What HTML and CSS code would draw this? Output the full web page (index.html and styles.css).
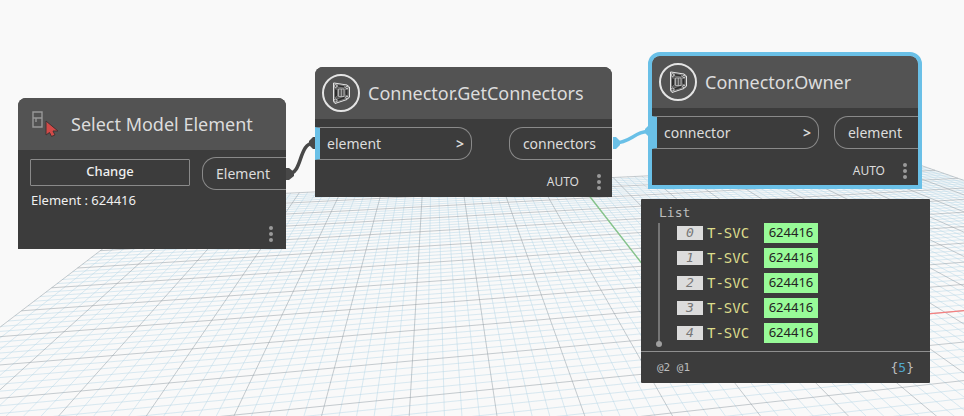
FILE: index.html
```html
<!DOCTYPE html>
<html lang="en">
<head>
<meta charset="utf-8">
<meta name="viewport" content="width=device-width, initial-scale=1">
<title>Graph workspace</title>
<link rel="stylesheet" href="styles.css">
</head>
<body>
<main class="workspace">
  <svg class="backdrop" aria-hidden="true">
    <path id="grid-minor" class="grid-minor"/>
    <path id="grid-major" class="grid-major"/>
    <path id="axis-x" class="axis-x"/>
    <path id="axis-y" class="axis-y"/>
  </svg>

  <svg class="wires" aria-hidden="true">
    <path class="wire" d="M288 174C303 174 298 143 314 143"/>
    <path class="plug" d="M286 168h3l5 4v4l-5 4h-3z"/>
    <path class="plug" d="M315 137h-2l-4 4v4l4 4h2z"/>
    <path class="wire wire-active" d="M615 143C631 143 634 131 652 131"/>
    <path class="plug plug-active" d="M613 137h3l4 4v4l-4 4h-3z"/>
    <path class="plug plug-active" d="M650 125h-1l-4 4v4l4 4h1z"/>
  </svg>

  <section class="node node-select">
    <header class="node-head">
      <svg class="pick-icon" viewBox="0 0 28 28" aria-hidden="true">
        <path class="pick-box" d="M2 2h9v15H2zM2 8h9M5 8v4"/>
        <path class="pick-arrow" d="M15 11v14l3.500-2.500 2 4 3.500-1.500-2-4h5z"/>
      </svg>
      <h2>Select Model Element</h2>
    </header>
    <div class="select-body">
      <div class="select-main">
        <button class="change" type="button">Change</button>
        <p>Element : 624416</p>
      </div>
      <div class="port port-out">Element</div>
    </div>
    <footer class="node-foot">
      <button class="more" type="button" aria-label="Node options"><i></i><i></i><i></i></button>
    </footer>
  </section>

  <section class="node node-get">
    <header class="node-head">
      <svg class="node-icon" viewBox="0 0 40 40" aria-hidden="true">
        <circle cx="20" cy="20" r="18"/>
        <path d="M13 10l13 2 2.500 2v10l-2.500 2.500-12 4-1.500-2V10z"/>
        <path class="dark" d="M13.500 15.500l3 1v6.500l-3 2zM24 16.500l3-.5v7l-3-1zM16.500 11.500l7 1.200v2.300l-7-1zM16 26l8-3v3l-8 2.500z"/>
        <path class="thin" d="M17.500 16h5.500v7.500h-5.500zM20.300 16v7.500"/>
        <circle class="dot" cx="14.500" cy="13" r="1.500"/><circle class="dot" cx="14.500" cy="27.500" r="1.500"/>
        <circle class="dot" cx="26" cy="14.500" r="1.300"/><circle class="dot" cx="26" cy="24.500" r="1.300"/>
      </svg>
      <h2>Connector.GetConnectors</h2>
    </header>
    <div class="ports">
      <div class="port port-in"><span>element</span><b>&gt;</b></div>
      <div class="port port-out">connectors</div>
    </div>
    <footer class="node-foot">
      <span class="lacing">AUTO</span>
      <button class="more" type="button" aria-label="Node options"><i></i><i></i><i></i></button>
    </footer>
  </section>

  <section class="node node-owner">
    <header class="node-head">
      <svg class="node-icon" viewBox="0 0 40 40" aria-hidden="true">
        <circle cx="20" cy="20" r="18"/>
        <path d="M13 10l13 2 2.500 2v10l-2.500 2.500-12 4-1.500-2V10z"/>
        <path class="dark" d="M13.500 15.500l3 1v6.500l-3 2zM24 16.500l3-.5v7l-3-1zM16.500 11.500l7 1.200v2.300l-7-1zM16 26l8-3v3l-8 2.500z"/>
        <path class="thin" d="M17.500 16h5.500v7.500h-5.500zM20.300 16v7.500"/>
        <circle class="dot" cx="14.500" cy="13" r="1.500"/><circle class="dot" cx="14.500" cy="27.500" r="1.500"/>
        <circle class="dot" cx="26" cy="14.500" r="1.300"/><circle class="dot" cx="26" cy="24.500" r="1.300"/>
      </svg>
      <h2>Connector.Owner</h2>
    </header>
    <div class="ports">
      <div class="port port-in"><span>connector</span><b>&gt;</b></div>
      <div class="port port-out">element</div>
    </div>
    <footer class="node-foot">
      <span class="lacing">AUTO</span>
      <button class="more" type="button" aria-label="Node options"><i></i><i></i><i></i></button>
    </footer>
  </section>

  <section class="preview">
    <div class="preview-body">
      <p class="preview-title">List</p>
      <ul class="items">
        <li><em>0</em><span>T-SVC</span><a href="#624416">624416</a></li>
        <li><em>1</em><span>T-SVC</span><a href="#624416">624416</a></li>
        <li><em>2</em><span>T-SVC</span><a href="#624416">624416</a></li>
        <li><em>3</em><span>T-SVC</span><a href="#624416">624416</a></li>
        <li><em>4</em><span>T-SVC</span><a href="#624416">624416</a></li>
      </ul>
    </div>
    <footer class="preview-foot">
      <span>@2 @1</span>
      <span class="count">{<b>5</b>}</span>
    </footer>
  </section>
</main>
<script src="grid.js"></script>
</body>
</html>
```
FILE: grid.js
```js
// Ground plane: 20 x 20 major cells, 5 minor cells each, seen in perspective.
const CELLS = 20;
const MINOR = 5;

// Plane position (u, v) and its place on the screen (x, y).
const anchors = [
  [0, 0, 168, 199],
  [20, 0, 914, 163],
  [2, 10, 81, 391],
  [9, 10, 630, 341]
];

function solve(rows) {
  const n = rows.length;
  for (let i = 0; i < n; i++) {
    let p = i;
    for (let r = i + 1; r < n; r++) {
      if (Math.abs(rows[r][i]) > Math.abs(rows[p][i])) p = r;
    }
    [rows[i], rows[p]] = [rows[p], rows[i]];
    for (let r = 0; r < n; r++) {
      if (r === i) continue;
      const k = rows[r][i] / rows[i][i];
      for (let c = i; c <= n; c++) rows[r][c] -= k * rows[i][c];
    }
  }
  return rows.map((row, i) => row[n] / row[i]);
}

const h = solve(anchors.flatMap(([u, v, x, y]) => [
  [u, v, 1, 0, 0, 0, -u * x, -v * x, x],
  [0, 0, 0, u, v, 1, -u * y, -v * y, y]
]));

const depth = ([u, v]) => h[6] * u + h[7] * v + 1;

function project([u, v]) {
  const w = depth([u, v]);
  return ((h[0] * u + h[1] * v + h[2]) / w).toFixed(1) + ' ' +
         ((h[3] * u + h[4] * v + h[5]) / w).toFixed(1);
}

// Cuts off the part of a segment that lies behind the camera.
function segment(a, b) {
  const near = 0.08;
  let wa = depth(a), wb = depth(b);
  if (wa < near && wb < near) return '';
  const cut = (p, q, wp, wq) => {
    const t = (near - wp) / (wq - wp);
    return [p[0] + t * (q[0] - p[0]), p[1] + t * (q[1] - p[1])];
  };
  if (wa < near) a = cut(a, b, wa, wb);
  else if (wb < near) b = cut(b, a, wb, wa);
  return 'M' + project(a) + 'L' + project(b);
}

let major = '', minor = '';
for (let i = 0; i <= CELLS * MINOR; i++) {
  const p = i / MINOR;
  const lines = segment([p, 0], [p, CELLS]) + segment([0, p], [CELLS, p]);
  if (i % MINOR === 0) major += lines; else minor += lines;
}
const mid = CELLS / 2;
document.getElementById('grid-minor').setAttribute('d', minor);
document.getElementById('grid-major').setAttribute('d', major);
document.getElementById('axis-x').setAttribute('d', segment([mid, mid], [CELLS, mid]));
document.getElementById('axis-y').setAttribute('d', segment([mid, mid], [mid, 0]));
```
FILE: styles.css
```css
* { box-sizing: border-box; }

body {
  margin: 0;
  background: #f9f9f9;
  color: #dcdcdc;
  font: 14px/20px "Noto Sans", sans-serif;
}

h2, p, ul { margin: 0; padding: 0; }
ul { list-style: none; }
button { font: inherit; color: inherit; background: none; cursor: pointer; }

.workspace {
  position: relative;
  min-height: 100vh;
  overflow: hidden;
}

.backdrop, .wires {
  position: absolute;
  inset: 0;
  width: 100%;
  height: 100%;
  fill: none;
}

.grid-minor { stroke: #b8d8e8; stroke-opacity: 0.5; }
.grid-major { stroke: #8f9ca3; stroke-opacity: 0.5; }
.axis-x { stroke: #f58080; stroke-width: 1.4; }
.axis-y { stroke: #86c48b; stroke-width: 1.4; }

.wire { stroke: #484848; stroke-width: 3.5; }
.wire-active { stroke: #6ac0e7; }
.plug { fill: #484848; }
.plug-active { fill: #6ac0e7; }

.node {
  position: absolute;
  background: #3c3c3c;
  border-radius: 8px 8px 0 0;
}
.node-select { left: 18px; top: 98px; width: 268px; }
.node-get { left: 315px; top: 67px; width: 297px; }
.node-owner { left: 652px; top: 56px; width: 266px; }
.node-owner::before {
  content: "";
  position: absolute;
  inset: -4px;
  border: 4px solid #6ac0e7;
  border-radius: 12px 12px 0 0;
}

.node-head {
  display: flex;
  align-items: center;
  height: 52px;
  padding-left: 6px;
  gap: 7px;
  background: #535353;
  border-radius: 8px 8px 0 0;
}
.node-head h2 {
  font-size: 18px;
  line-height: 24px;
  font-weight: 400;
  white-space: nowrap;
}

.node-icon { width: 40px; height: 40px; fill: none; stroke: #e4e4e4; stroke-width: 1; }
.node-icon > circle:first-child { stroke-width: 2; }
.node-icon .dark { fill: #2c2c2c; stroke: #a8a8a8; stroke-width: 0.5; }
.node-icon .thin { stroke: #c4c4c4; stroke-width: 0.8; }
.node-icon .dot { fill: #535353; stroke-width: 0.8; }

.node-select .node-head { padding-left: 13px; gap: 12px; }
.pick-icon { width: 28px; height: 28px; fill: none; }
.pick-box { stroke: #989898; stroke-width: 1.4; }
.pick-arrow { fill: #d14a48; stroke: #3f3434; stroke-width: 1; }

.ports {
  display: flex;
  justify-content: space-between;
  padding-top: 8px;
}

.port {
  display: flex;
  align-items: center;
  height: 33px;
  border: 1px solid #8a8a8a;
}
.port-in {
  justify-content: space-between;
  width: 157px;
  padding: 0 7px;
  border-left: 5px solid #6ac0e7;
  border-radius: 0 14px 14px 0;
}
.node-owner .port-in { width: 167px; }
.port-in b { font-weight: 600; }
.port-out {
  padding: 0 16px 0 13px;
  border-right: 0;
  border-radius: 14px 0 0 14px;
}

.node-foot {
  display: flex;
  align-items: center;
  justify-content: flex-end;
  gap: 18px;
  height: 37px;
  padding: 7px 11px 0 0;
  font-size: 12px;
}
.node-owner .node-foot { height: 36px; }

.more {
  display: flex;
  flex-direction: column;
  gap: 2px;
  padding: 0;
  border: 0;
}
.more i { width: 4px; height: 4px; border-radius: 50%; background: #9a9a9a; }

.select-body {
  display: flex;
  justify-content: space-between;
  padding: 7px 0 0 12px;
  color: #f0f0f0;
}
.select-body .port { color: #dcdcdc; }
.select-main { padding-top: 2px; font-size: 13px; }
.select-main p { padding: 4px 1px 0; }
.change {
  display: block;
  width: 160px;
  height: 27px;
  padding: 0 0 3px;
  border: 1px solid #8a8a8a;
  border-radius: 1px;
  font-weight: 500;
}
.node-select .node-foot { height: 39px; padding: 9px 13px 0 0; }

.preview {
  position: absolute;
  left: 641px;
  top: 199px;
  width: 289px;
  background: #3c3c3c;
  border-radius: 1px;
  font-family: "DejaVu Sans Mono", monospace;
  font-size: 13px;
  color: #bdbdbd;
}
.preview-body { padding: 4px 18px 7px 17px; }
.preview-title { padding-left: 1px; }
.items {
  position: relative;
  display: grid;
  gap: 5px;
  padding: 0 0 1px 17px;
  border-left: 2px solid #757575;
}
.items::after {
  content: "";
  position: absolute;
  left: -4px;
  bottom: -3px;
  width: 6px;
  height: 6px;
  border-radius: 50%;
  background: #a0a0a0;
}
.items li { display: flex; align-items: center; }
.items em {
  width: 26px;
  height: 14px;
  line-height: 14px;
  text-align: center;
  background: #dcdcdc;
  color: #777;
}
.items span { width: 56px; padding-left: 4px; color: #dcdc8c; margin-right: 5px; font-size: 14px; }
.items a {
  width: 54px;
  height: 20px;
  text-align: center;
  background: #98fb98;
  color: #222;
  font: 13px/19px "Noto Sans", sans-serif;
  text-decoration: none;
}
.preview-foot {
  display: flex;
  align-items: center;
  justify-content: space-between;
  height: 32px;
  padding: 0 16px;
  border-top: 1px solid #8f8f8f;
  font-size: 11px;
}
.count { font-size: 13px; }
.count b { font-weight: 400; color: #4fa8d0; }
```
